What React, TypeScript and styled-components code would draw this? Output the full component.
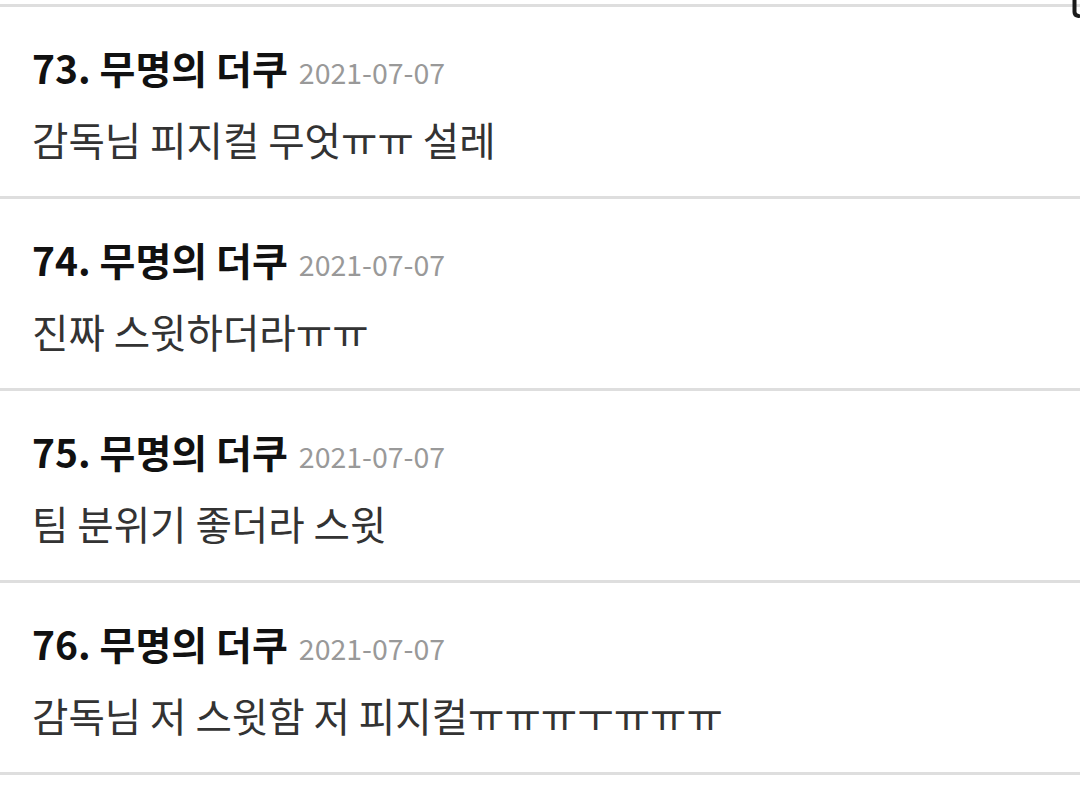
import styled, { createGlobalStyle } from "styled-components";

const GlobalStyle = createGlobalStyle`
    body {
        margin: 0;
        background: #fff;
        font-family: "Noto Sans CJK KR", "Noto Sans", sans-serif;
    }
`

type Comment = {
    no: number
    author: string
    date: string
    body: string
}

const comments: Comment[] = [
    { no: 73, author: "무명의 더쿠", date: "2021-07-07", body: "감독님 피지컬 무엇ㅠㅠ 설레" },
    { no: 74, author: "무명의 더쿠", date: "2021-07-07", body: "진짜 스윗하더라ㅠㅠ" },
    { no: 75, author: "무명의 더쿠", date: "2021-07-07", body: "팀 분위기 좋더라 스윗" },
    { no: 76, author: "무명의 더쿠", date: "2021-07-07", body: "감독님 저 스윗함 저 피지컬ㅠㅠㅠㅜㅠㅠㅠ" },
]

const App = () => {
    return (
        <>
            <GlobalStyle />
            <Page>
                <EdgeMark width="10" height="20" viewBox="0 0 10 20">
                    <path d="M4.5 0 V12 Q4.5 15.5 8.5 16" fill="none" stroke="#1a1a1a" strokeWidth="4" strokeLinecap="round" />
                </EdgeMark>
                <List>
                    {comments.map(item => (
                        <Item key={item.no}>
                            <Header>
                                <Author>{item.no}. {item.author}</Author>
                                <Date>{item.date}</Date>
                            </Header>
                            <Body>{item.body}</Body>
                        </Item>
                    ))}
                </List>
            </Page>
        </>
    )
}
export default App

const Page = styled.div`
    position: relative;
    width: 1080px;
    height: 800px;
    overflow: hidden;
    padding-top: 4px;
    box-sizing: border-box;
`

const EdgeMark = styled.svg`
    position: absolute;
    top: 0;
    right: 0;
`

const List = styled.ul`
    list-style: none;
    margin: 0;
    padding: 0;
    border-top: 3px solid #dedede;
`

const Item = styled.li`
    height: 189px;
    box-sizing: content-box;
    border-bottom: 3px solid #dedede;
    padding: 0 32px;
    display: flex;
    flex-direction: column;
`

const Header = styled.div`
    display: flex;
    align-items: baseline;
    gap: 11px;
    margin-top: 36px;
    line-height: 48px;
`

const Author = styled.span`
    font-size: 39px;
    font-weight: 700;
    color: #111;
`

const Date = styled.span`
    font-size: 28.5px;
    color: #999;
`

const Body = styled.div`
    margin-top: 19px;
    font-size: 39.6px;
    line-height: 48px;
    color: #333;
`
